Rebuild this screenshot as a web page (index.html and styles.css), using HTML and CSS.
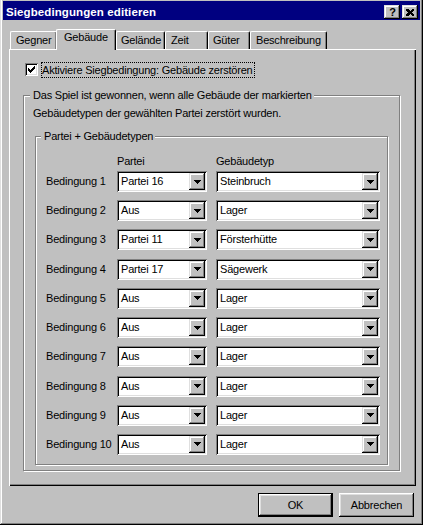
FILE: index.html
```html
<!DOCTYPE html>
<html lang="de">
<head>
<meta charset="utf-8">
<title>Siegbedingungen editieren</title>
<link rel="stylesheet" href="styles.css">
</head>
<body>
<div class="window">
  <div class="titlebar">
    <span class="title">Siegbedingungen editieren</span>
    <div class="tb-buttons">
      <div class="tb-btn help">?</div>
      <div class="tb-btn close">
        <svg width="8" height="7" viewBox="0 0 8 7"><path d="M0 0h2l2 2 2-2h2v1l-2 2.5 2 2.5v1h-2l-2-2-2 2h-2v-1l2-2.5-2-2.5z" fill="#000"/></svg>
      </div>
    </div>
  </div>

  <div class="tabs">
    <div class="tab w-gegner">Gegner</div>
    <div class="tab active w-gebaeude">Gebäude</div>
    <div class="tab w-gelaende">Gelände</div>
    <div class="tab w-zeit">Zeit</div>
    <div class="tab w-gueter">Güter</div>
    <div class="tab w-beschr">Beschreibung</div>
  </div>

  <div class="panel">
    <div class="checkrow">
      <div class="checkbox">
        <svg width="7" height="7" viewBox="0 0 7 7"><path d="M0 2h1v1h1v1h1v-1h1v-1h1v-1h1v-1h1v3h-1v1h-1v1h-1v1h-1v1h-1v-1h-1v-1h-1v-1h-1z" fill="#000"/></svg>
      </div>
      <div class="checklabel">Aktiviere Siegbedingung: Gebäude zerstören</div>
    </div>

    <div class="group group-outer">
      <div class="legend legend-outer">Das Spiel ist gewonnen, wenn alle Gebäude der markierten</div>
      <div class="desc">Gebäudetypen der gewählten Partei zerstört wurden.</div>

      <div class="group group-inner">
        <div class="legend legend-inner">Partei + Gebäudetypen</div>
        <div class="cols heads">
          <span></span><span>Partei</span><span>Gebäudetyp</span>
        </div>
        <div class="cols rows">
          <span class="rowlabel">Bedingung 1</span>
          <div class="combo"><span class="combo-text">Partei 16</span><span class="combo-btn"><svg width="7" height="4" viewBox="0 0 7 4"><path d="M0 0H7V1H6V2H5V3H4V4H3V3H2V2H1V1H0Z" fill="#000"/></svg></span></div>
          <div class="combo"><span class="combo-text">Steinbruch</span><span class="combo-btn"><svg width="7" height="4" viewBox="0 0 7 4"><path d="M0 0H7V1H6V2H5V3H4V4H3V3H2V2H1V1H0Z" fill="#000"/></svg></span></div>

          <span class="rowlabel">Bedingung 2</span>
          <div class="combo"><span class="combo-text">Aus</span><span class="combo-btn"><svg width="7" height="4" viewBox="0 0 7 4"><path d="M0 0H7V1H6V2H5V3H4V4H3V3H2V2H1V1H0Z" fill="#000"/></svg></span></div>
          <div class="combo"><span class="combo-text">Lager</span><span class="combo-btn"><svg width="7" height="4" viewBox="0 0 7 4"><path d="M0 0H7V1H6V2H5V3H4V4H3V3H2V2H1V1H0Z" fill="#000"/></svg></span></div>

          <span class="rowlabel">Bedingung 3</span>
          <div class="combo"><span class="combo-text">Partei 11</span><span class="combo-btn"><svg width="7" height="4" viewBox="0 0 7 4"><path d="M0 0H7V1H6V2H5V3H4V4H3V3H2V2H1V1H0Z" fill="#000"/></svg></span></div>
          <div class="combo"><span class="combo-text">Försterhütte</span><span class="combo-btn"><svg width="7" height="4" viewBox="0 0 7 4"><path d="M0 0H7V1H6V2H5V3H4V4H3V3H2V2H1V1H0Z" fill="#000"/></svg></span></div>

          <span class="rowlabel">Bedingung 4</span>
          <div class="combo"><span class="combo-text">Partei 17</span><span class="combo-btn"><svg width="7" height="4" viewBox="0 0 7 4"><path d="M0 0H7V1H6V2H5V3H4V4H3V3H2V2H1V1H0Z" fill="#000"/></svg></span></div>
          <div class="combo"><span class="combo-text">Sägewerk</span><span class="combo-btn"><svg width="7" height="4" viewBox="0 0 7 4"><path d="M0 0H7V1H6V2H5V3H4V4H3V3H2V2H1V1H0Z" fill="#000"/></svg></span></div>

          <span class="rowlabel">Bedingung 5</span>
          <div class="combo"><span class="combo-text">Aus</span><span class="combo-btn"><svg width="7" height="4" viewBox="0 0 7 4"><path d="M0 0H7V1H6V2H5V3H4V4H3V3H2V2H1V1H0Z" fill="#000"/></svg></span></div>
          <div class="combo"><span class="combo-text">Lager</span><span class="combo-btn"><svg width="7" height="4" viewBox="0 0 7 4"><path d="M0 0H7V1H6V2H5V3H4V4H3V3H2V2H1V1H0Z" fill="#000"/></svg></span></div>

          <span class="rowlabel">Bedingung 6</span>
          <div class="combo"><span class="combo-text">Aus</span><span class="combo-btn"><svg width="7" height="4" viewBox="0 0 7 4"><path d="M0 0H7V1H6V2H5V3H4V4H3V3H2V2H1V1H0Z" fill="#000"/></svg></span></div>
          <div class="combo"><span class="combo-text">Lager</span><span class="combo-btn"><svg width="7" height="4" viewBox="0 0 7 4"><path d="M0 0H7V1H6V2H5V3H4V4H3V3H2V2H1V1H0Z" fill="#000"/></svg></span></div>

          <span class="rowlabel">Bedingung 7</span>
          <div class="combo"><span class="combo-text">Aus</span><span class="combo-btn"><svg width="7" height="4" viewBox="0 0 7 4"><path d="M0 0H7V1H6V2H5V3H4V4H3V3H2V2H1V1H0Z" fill="#000"/></svg></span></div>
          <div class="combo"><span class="combo-text">Lager</span><span class="combo-btn"><svg width="7" height="4" viewBox="0 0 7 4"><path d="M0 0H7V1H6V2H5V3H4V4H3V3H2V2H1V1H0Z" fill="#000"/></svg></span></div>

          <span class="rowlabel">Bedingung 8</span>
          <div class="combo"><span class="combo-text">Aus</span><span class="combo-btn"><svg width="7" height="4" viewBox="0 0 7 4"><path d="M0 0H7V1H6V2H5V3H4V4H3V3H2V2H1V1H0Z" fill="#000"/></svg></span></div>
          <div class="combo"><span class="combo-text">Lager</span><span class="combo-btn"><svg width="7" height="4" viewBox="0 0 7 4"><path d="M0 0H7V1H6V2H5V3H4V4H3V3H2V2H1V1H0Z" fill="#000"/></svg></span></div>

          <span class="rowlabel">Bedingung 9</span>
          <div class="combo"><span class="combo-text">Aus</span><span class="combo-btn"><svg width="7" height="4" viewBox="0 0 7 4"><path d="M0 0H7V1H6V2H5V3H4V4H3V3H2V2H1V1H0Z" fill="#000"/></svg></span></div>
          <div class="combo"><span class="combo-text">Lager</span><span class="combo-btn"><svg width="7" height="4" viewBox="0 0 7 4"><path d="M0 0H7V1H6V2H5V3H4V4H3V3H2V2H1V1H0Z" fill="#000"/></svg></span></div>

          <span class="rowlabel">Bedingung 10</span>
          <div class="combo"><span class="combo-text">Aus</span><span class="combo-btn"><svg width="7" height="4" viewBox="0 0 7 4"><path d="M0 0H7V1H6V2H5V3H4V4H3V3H2V2H1V1H0Z" fill="#000"/></svg></span></div>
          <div class="combo"><span class="combo-text">Lager</span><span class="combo-btn"><svg width="7" height="4" viewBox="0 0 7 4"><path d="M0 0H7V1H6V2H5V3H4V4H3V3H2V2H1V1H0Z" fill="#000"/></svg></span></div>
        </div>
      </div>
    </div>
  </div>

  <div class="actions">
    <div class="btn default">OK</div>
    <div class="btn">Abbrechen</div>
  </div>
</div>
</body>
</html>
```
FILE: styles.css
```css
* { box-sizing: border-box; }
html, body { margin: 0; padding: 0; background: #c0c0c0; }
body {
  font-family: "Liberation Sans", Arial, sans-serif;
  font-size: 11px;
  line-height: 13px;
  letter-spacing: -0.2px;
  color: #000;
  overflow: hidden;
}
svg { display: block; shape-rendering: crispEdges; }

.window {
  width: 423px;
  height: 527px;
  margin-top: -2px;
  padding: 3px;
  background: #c0c0c0;
  display: flex;
  flex-direction: column;
  box-shadow: inset -1px -1px #000, inset 1px 1px #dfdfdf, inset -2px -2px #808080, inset 2px 2px #fff;
}

.titlebar {
  flex: none;
  height: 19px;
  background: #000080;
  color: #fff;
  display: flex;
  justify-content: space-between;
  padding: 0 2px 0 3px;
}
.title { font-weight: bold; font-size: 11.5px; padding-top: 5px; letter-spacing: 0.1px; }
.tb-buttons { display: flex; gap: 2px; margin-top: 4px; }
.tb-btn {
  width: 16px; height: 14px;
  background: #c0c0c0;
  color: #000;
  display: flex; align-items: center; justify-content: center;
  box-shadow: inset -1px -1px #000, inset 1px 1px #dfdfdf, inset -2px -2px #808080, inset 2px 2px #fff;
}
.tb-btn.help { font-weight: bold; font-size: 11px; line-height: 12px; padding-left: 1px; letter-spacing: 0; }

.tabs {
  flex: none;
  display: flex;
  align-items: flex-end;
  height: 20px;
  margin: 9px 0 0 7px;
  position: relative;
  z-index: 1;
}
.tab {
  height: 18px;
  padding: 2px 0 0 5px;
  background: #c0c0c0;
  border-top: 1px solid #fff;
  border-left: 1px solid #fff;
  border-right: 1px solid #000;
  border-radius: 2px 2px 0 0;
  box-shadow: inset -1px 0 #808080;
  white-space: nowrap;
}
.tab.active {
  height: 21px;
  margin-left: -1px;
  margin-bottom: -1px;
  padding: 1px 0 0 7px;
  position: relative;
  z-index: 2;
}
.w-gegner { width: 47px; }
.w-gebaeude { width: 60px; }
.w-gelaende { width: 49px; padding-left: 4px; }
.w-zeit { width: 43px; }
.w-gueter { width: 42px; padding-left: 4px; }
.w-beschr { width: 77px; }

.panel {
  flex: none;
  width: 407px;
  height: 437px;
  margin-left: 6px;
  padding: 13px 0 0 15px;
  box-shadow: inset 1px 1px #fff, inset -1px -1px #000, inset -2px -2px #808080;
}

.checkrow { display: flex; align-items: flex-start; height: 16px; padding-left: 1px; }
.checkbox {
  width: 13px; height: 13px;
  margin-top: 1px;
  background: #fff;
  display: flex; align-items: center; justify-content: center;
  box-shadow: inset 1px 1px #808080, inset -1px -1px #fff, inset 2px 2px #000, inset -2px -2px #dfdfdf;
}
.checklabel {
  margin-left: 3px;
  height: 16px;
  border: 1px dotted #000;
  padding: 0 1px 0 0;
  line-height: 14px;
  white-space: nowrap;
}

.group {
  border: 1px solid #808080;
  box-shadow: inset 1px 1px #fff, 1px 1px #fff;
}
.group-outer { width: 377px; height: 376px; margin-top: 17px; margin-left: -1px; }
.legend {
  width: fit-content;
  margin-top: -7px;
  background: #c0c0c0;
  white-space: nowrap;
}
.legend-outer { margin-left: 6px; padding: 0 2px 0 3px; }
.desc { margin: 5px 0 0 9px; white-space: nowrap; }

.group-inner { width: 353px; height: 329px; margin: 16px 0 0 11px; }
.legend-inner { margin-left: 5px; padding: 0 2px 0 3px; }

.cols {
  display: grid;
  grid-template-columns: 62px 90px 164px;
  column-gap: 9px;
  margin-left: 10px;
}
.heads { margin-top: 12px; }
.rows { margin-top: 3px; row-gap: 8.22px; align-items: center; }
.rowlabel { white-space: nowrap; }

.combo {
  height: 21px;
  padding: 2px;
  background: #fff;
  display: flex;
  align-items: center;
  box-shadow: inset 1px 1px #808080, inset -1px -1px #fff, inset 2px 2px #000, inset -2px -2px #dfdfdf;
}
.combo-text { flex: 1; padding-left: 2px; white-space: nowrap; overflow: hidden; }
.combo-btn {
  flex: none;
  width: 16px; height: 17px;
  background: #c0c0c0;
  display: flex; align-items: center; justify-content: center;
  box-shadow: inset -1px -1px #000, inset 1px 1px #dfdfdf, inset -2px -2px #808080, inset 2px 2px #fff;
}

.actions {
  flex: none;
  display: flex;
  justify-content: flex-end;
  gap: 6px;
  margin: 7px 6px 0 0;
}
.btn {
  width: 75px; height: 24px;
  display: flex; align-items: center; justify-content: center;
  box-shadow: inset -1px -1px #000, inset 1px 1px #fff, inset -2px -2px #808080, inset 2px 2px #dfdfdf;
}
.btn.default {
  box-shadow: inset 0 0 0 1px #000, inset -2px -2px #000, inset 2px 2px #fff, inset -3px -3px #808080, inset 3px 3px #dfdfdf;
}
```
